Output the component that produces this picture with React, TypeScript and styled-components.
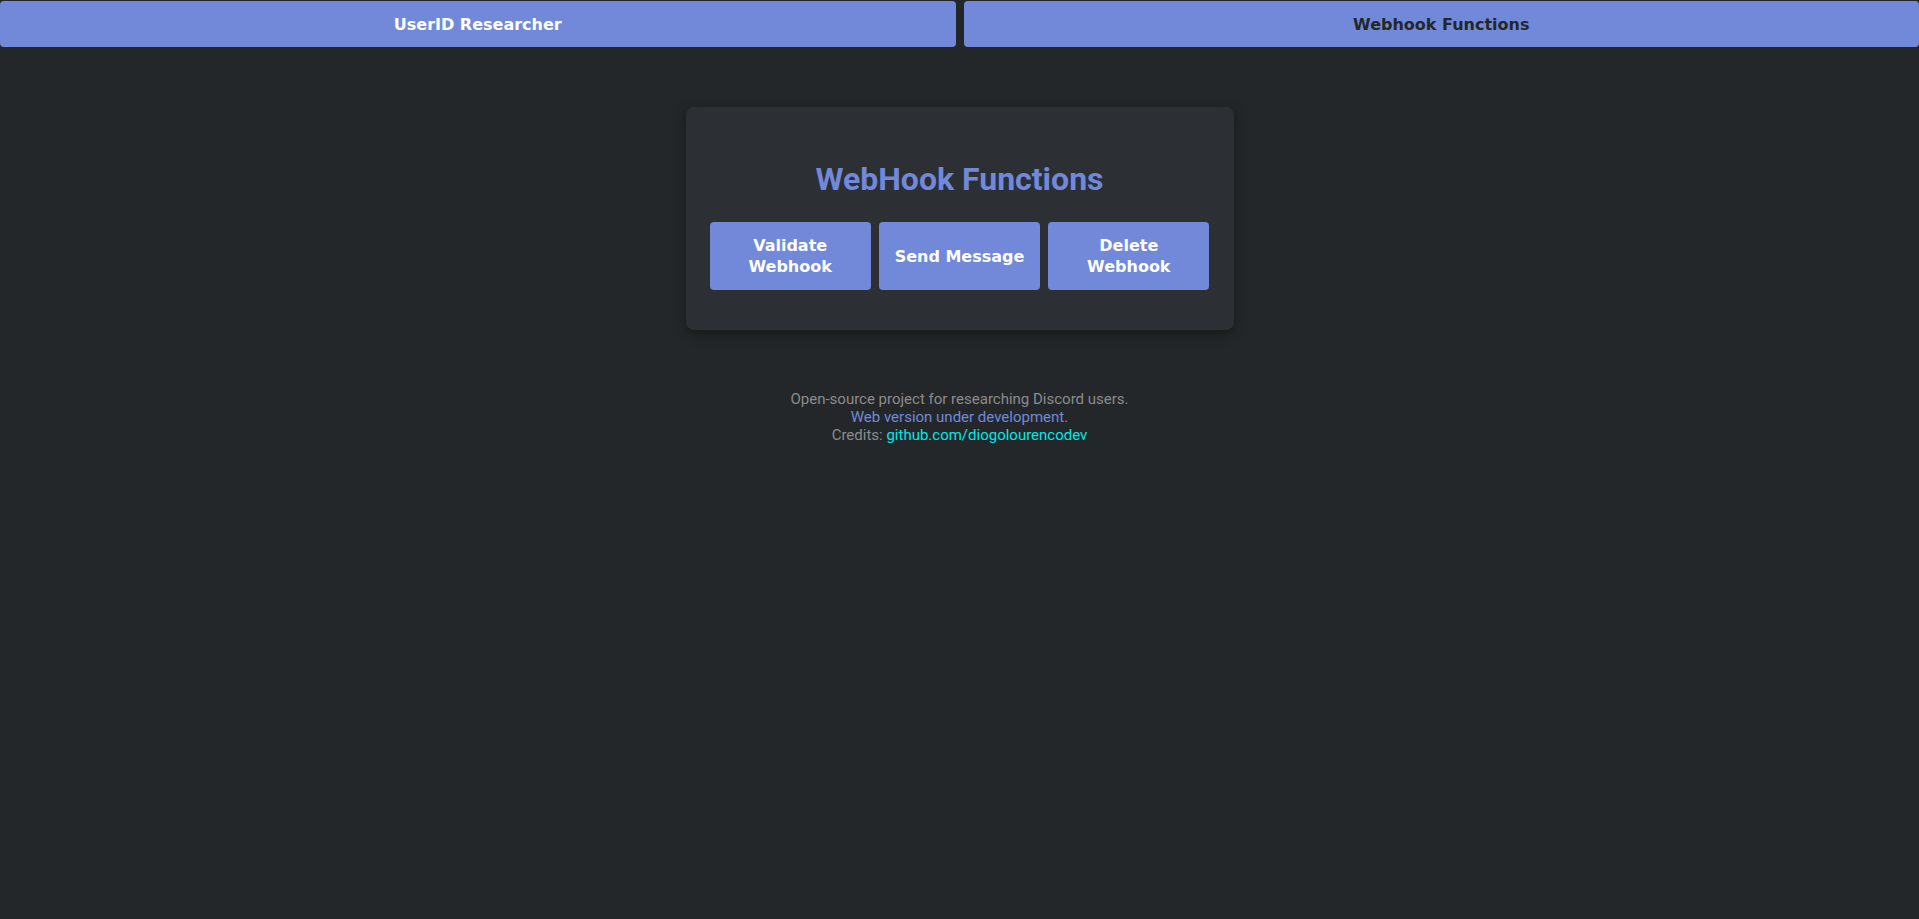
import React from "react";
import styled, { createGlobalStyle } from "styled-components";

const GlobalStyle = createGlobalStyle`
  html, body {
    margin: 0;
    padding: 0;
    background: #23272a;
  }
  body {
    font-family: Roboto, "Liberation Sans", sans-serif;
  }
`;

const Page = styled.div`
  min-height: 919px;
  background: #23272a;
`;

const TabBar = styled.nav`
  display: flex;
  gap: 8px;
  padding-top: 1px;
`;

const Tab = styled.button<{ $active?: boolean }>`
  flex: 1;
  height: 46px;
  border: none;
  border-radius: 4px;
  background: #7289da;
  color: ${(p) => (p.$active ? "#23272a" : "#ffffff")};
  font-family: "DejaVu Sans", sans-serif;
  font-weight: bold;
  font-size: 16px;
  cursor: pointer;
  padding: 0;
`;

const Main = styled.main`
  display: flex;
  flex-direction: column;
  align-items: center;
  padding-top: 60px;
`;

const Card = styled.section`
  width: 500px;
  padding: 53px 24px 40px;
  background: #2c2f33;
  border-radius: 8px;
  box-shadow: 0 4px 12px rgba(0, 0, 0, 0.35);
  display: flex;
  flex-direction: column;
  align-items: center;
`;

const Title = styled.h2`
  margin: 0 0 24px;
  font-family: Roboto, sans-serif;
  font-weight: 700;
  font-size: 32px;
  line-height: 38px;
  color: #7289da;
`;

const ButtonRow = styled.div`
  display: grid;
  grid-template-columns: repeat(3, 1fr);
  gap: 8px;
  width: 100%;
`;

const ActionButton = styled.button`
  height: 68px;
  border: none;
  border-radius: 4px;
  background: #7289da;
  color: #ffffff;
  font-family: "DejaVu Sans", sans-serif;
  font-weight: bold;
  font-size: 16px;
  line-height: 21px;
  padding: 0 8px;
  cursor: pointer;
`;

const Footer = styled.footer`
  margin-top: 60px;
  text-align: center;
  font-family: Roboto, sans-serif;
  font-size: 15px;
  line-height: 18px;
  color: #8c8c8c;
`;

const Line = styled.div<{ $accent?: boolean }>`
  color: ${(p) => (p.$accent ? "#7289da" : "#8c8c8c")};
`;

const Link = styled.a`
  color: #00e8e8;
  text-decoration: none;
`;

export default function App() {
  return (
    <Page>
      <GlobalStyle />
      <TabBar>
        <Tab>UserID Researcher</Tab>
        <Tab $active>Webhook Functions</Tab>
      </TabBar>
      <Main>
        <Card>
          <Title>WebHook Functions</Title>
          <ButtonRow>
            <ActionButton>Validate Webhook</ActionButton>
            <ActionButton>Send Message</ActionButton>
            <ActionButton>Delete Webhook</ActionButton>
          </ButtonRow>
        </Card>
        <Footer>
          <Line>Open-source project for researching Discord users.</Line>
          <Line $accent>Web version under development.</Line>
          <Line>
            Credits: <Link href="#">github.com/diogolourencodev</Link>
          </Line>
        </Footer>
      </Main>
    </Page>
  );
}
